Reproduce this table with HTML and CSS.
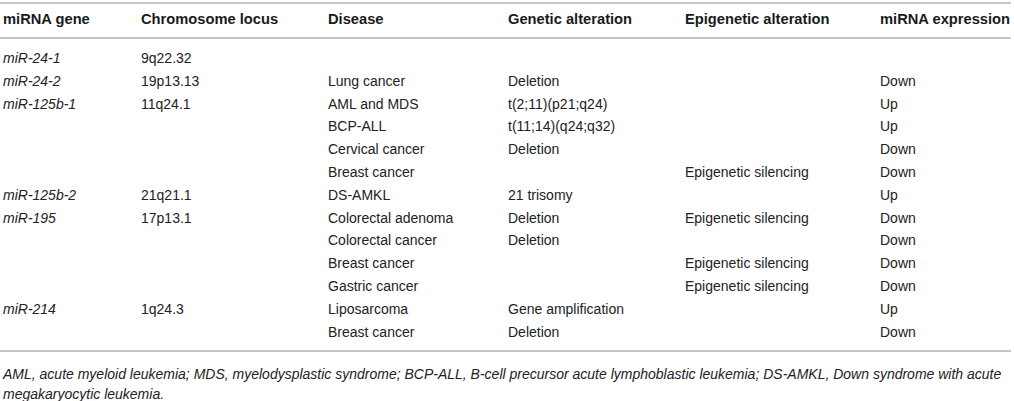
FILE: index.html
```html
<!DOCTYPE html>
<html>
<head>
<meta charset="utf-8">
<link rel="stylesheet" href="styles.css">
</head>
<body>
<div class="wrap">
<table class="mirna">
<colgroup>
<col class="c1"><col class="c2"><col class="c3"><col class="c4"><col class="c5"><col class="c6">
</colgroup>
<thead>
<tr><th>miRNA gene</th><th>Chromosome locus</th><th>Disease</th><th>Genetic alteration</th><th>Epigenetic alteration</th><th>miRNA expression</th></tr>
</thead>
<tbody>
<tr class="first"><td class="gene">miR-24-1</td><td>9q22.32</td><td></td><td></td><td></td><td></td></tr>
<tr><td class="gene">miR-24-2</td><td>19p13.13</td><td>Lung cancer</td><td>Deletion</td><td></td><td>Down</td></tr>
<tr><td class="gene">miR-125b-1</td><td>11q24.1</td><td>AML and MDS</td><td>t(2;11)(p21;q24)</td><td></td><td>Up</td></tr>
<tr><td></td><td></td><td>BCP-ALL</td><td>t(11;14)(q24;q32)</td><td></td><td>Up</td></tr>
<tr><td></td><td></td><td>Cervical cancer</td><td>Deletion</td><td></td><td>Down</td></tr>
<tr><td></td><td></td><td>Breast cancer</td><td></td><td>Epigenetic silencing</td><td>Down</td></tr>
<tr><td class="gene">miR-125b-2</td><td>21q21.1</td><td>DS-AMKL</td><td>21 trisomy</td><td></td><td>Up</td></tr>
<tr><td class="gene">miR-195</td><td>17p13.1</td><td>Colorectal adenoma</td><td>Deletion</td><td>Epigenetic silencing</td><td>Down</td></tr>
<tr><td></td><td></td><td>Colorectal cancer</td><td>Deletion</td><td></td><td>Down</td></tr>
<tr><td></td><td></td><td>Breast cancer</td><td></td><td>Epigenetic silencing</td><td>Down</td></tr>
<tr><td></td><td></td><td>Gastric cancer</td><td></td><td>Epigenetic silencing</td><td>Down</td></tr>
<tr><td class="gene">miR-214</td><td>1q24.3</td><td>Liposarcoma</td><td>Gene amplification</td><td></td><td>Up</td></tr>
<tr class="last"><td></td><td></td><td>Breast cancer</td><td>Deletion</td><td></td><td>Down</td></tr>
</tbody>
</table>
<p class="note">AML, acute myeloid leukemia; MDS, myelodysplastic syndrome; BCP-ALL, B-cell precursor acute lymphoblastic leukemia; DS-AMKL, Down syndrome with acute megakaryocytic leukemia.</p>
</div>
</body>
</html>
```

FILE: styles.css
```css
html, body {
  margin: 0;
  padding: 0;
  background: #ffffff;
}
.wrap {
  width: 1011px;
  padding-top: 2px;
  font-family: "Liberation Sans", Arial, sans-serif;
  color: #222222;
}
.mirna {
  width: 1011px;
  border-collapse: collapse;
  table-layout: fixed;
  font-size: 14px;
}
.c1 { width: 138px; }
.c2 { width: 187px; }
.c3 { width: 180px; }
.c4 { width: 177px; }
.c5 { width: 195px; }
.c6 { width: 134px; }
.mirna thead tr {
  border-top: 2px solid #c4c4c4;
  border-bottom: 2px solid #c4c4c4;
}
.mirna th {
  text-align: left;
  font-weight: bold;
  font-size: 14.7px;
  padding: 4px 0 7px 3px;
  line-height: 22px;
  white-space: nowrap;
  color: #1a1a1a;
}
.mirna td {
  padding: 0 0 0 3px;
  line-height: 22.8px;
  white-space: nowrap;
  vertical-align: middle;
}
.mirna tr.first td { padding-top: 8px; }
.mirna tr.last td { padding-bottom: 7px; }
.mirna tbody tr.last { border-bottom: 2px solid #c4c4c4; }
.gene { font-style: italic; }
.note {
  margin: 0;
  padding: 12px 0 0 3px;
  font-size: 14px;
  line-height: 20px;
  font-style: italic;
  color: #222222;
}
```
